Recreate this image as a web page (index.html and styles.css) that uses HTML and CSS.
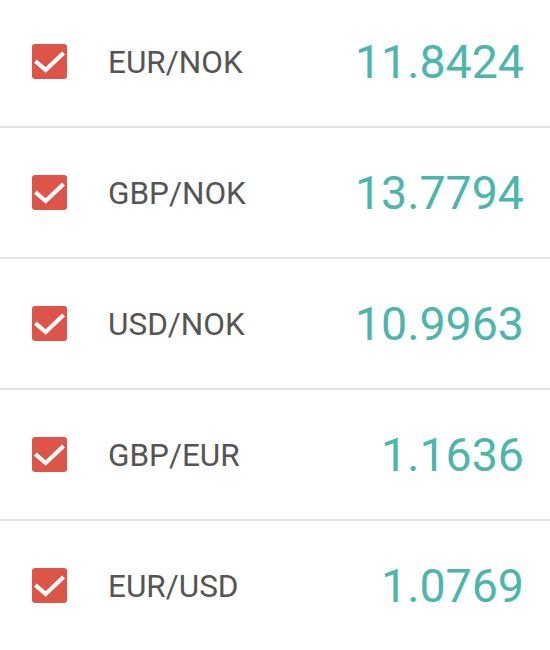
FILE: index.html
```html
<!DOCTYPE html>
<html>
<head>
<meta charset="utf-8">
<link rel="stylesheet" href="styles.css">
</head>
<body>
<ul class="list">
  <li class="row">
    <span class="check"><svg viewBox="0 0 35 35" width="35" height="35"><path d="M5 18.5 L13.7 26 L30 10.5" fill="none" stroke="#fff" stroke-width="4.2" stroke-linecap="square"/></svg></span>
    <span class="pair">EUR/NOK</span>
    <span class="rate">11.8424</span>
  </li>
  <li class="row">
    <span class="check"><svg viewBox="0 0 35 35" width="35" height="35"><path d="M5 18.5 L13.7 26 L30 10.5" fill="none" stroke="#fff" stroke-width="4.2" stroke-linecap="square"/></svg></span>
    <span class="pair">GBP/NOK</span>
    <span class="rate">13.7794</span>
  </li>
  <li class="row">
    <span class="check"><svg viewBox="0 0 35 35" width="35" height="35"><path d="M5 18.5 L13.7 26 L30 10.5" fill="none" stroke="#fff" stroke-width="4.2" stroke-linecap="square"/></svg></span>
    <span class="pair">USD/NOK</span>
    <span class="rate">10.9963</span>
  </li>
  <li class="row">
    <span class="check"><svg viewBox="0 0 35 35" width="35" height="35"><path d="M5 18.5 L13.7 26 L30 10.5" fill="none" stroke="#fff" stroke-width="4.2" stroke-linecap="square"/></svg></span>
    <span class="pair">GBP/EUR</span>
    <span class="rate">1.1636</span>
  </li>
  <li class="row">
    <span class="check"><svg viewBox="0 0 35 35" width="35" height="35"><path d="M5 18.5 L13.7 26 L30 10.5" fill="none" stroke="#fff" stroke-width="4.2" stroke-linecap="square"/></svg></span>
    <span class="pair">EUR/USD</span>
    <span class="rate">1.0769</span>
  </li>
</ul>
</body>
</html>
```
FILE: styles.css
```css
html, body {
  margin: 0;
  padding: 0;
  background: #fff;
  overflow: hidden;
}
body {
  font-family: Roboto, "Liberation Sans", sans-serif;
}
.list {
  list-style: none;
  margin: -3px 0 0 0;
  padding: 0;
}
.row {
  display: flex;
  align-items: center;
  height: 129px;
  border-bottom: 2px solid #e3e3e3;
  padding: 0 26px 0 32px;
}
.check {
  display: flex;
  width: 35px;
  height: 35px;
  border-radius: 3px;
  background: #dd5448;
  flex: none;
}
.pair {
  flex: 1;
  margin-left: 41px;
  font-size: 31.5px;
  color: #555;
  position: relative;
  top: 1px;
}
.rate {
  font-size: 46.5px;
  color: #4db6ac;
}
```
